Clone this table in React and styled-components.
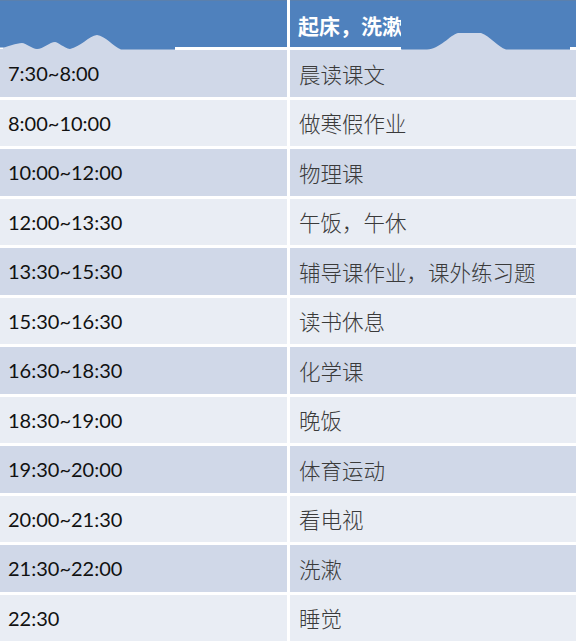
import React from "react";
import styled, { createGlobalStyle } from "styled-components";

/* ---------- Data ---------- */

const schedule = [
  ["7:30~8:00", "晨读课文"],
  ["8:00~10:00", "做寒假作业"],
  ["10:00~12:00", "物理课"],
  ["12:00~13:30", "午饭，午休"],
  ["13:30~15:30", "辅导课作业，课外练习题"],
  ["15:30~16:30", "读书休息"],
  ["16:30~18:30", "化学课"],
  ["18:30~19:00", "晚饭"],
  ["19:30~20:00", "体育运动"],
  ["20:00~21:30", "看电视"],
  ["21:30~22:00", "洗漱"],
  ["22:30", "睡觉"],
];

const BLUE = "#4f81bd";
const DARK_ROW = "#d0d8e8";
const LIGHT_ROW = "#e9edf4";

/* ---------- Styles ---------- */

const GlobalStyle = createGlobalStyle`
  html, body {
    margin: 0;
    padding: 0;
    background: #ffffff;
  }
`;

const Table = styled.div`
  position: relative;
  width: 576px;
  height: 641px;
  overflow: hidden;
  display: grid;
  grid-template-columns: 287px 286px;
  grid-template-rows: 47px repeat(12, 46.5px);
  column-gap: 3px;
  row-gap: 3px;
  background: #ffffff;
`;

const HeadCell = styled.div`
  background: ${BLUE};
  border-top: 1px solid #5b80ad;
  display: flex;
  align-items: center;
  padding-left: 8px;
  padding-top: 2px;
  color: #ffffff;
  font-family: "Noto Sans CJK SC", "DejaVu Serif", serif;
  font-weight: 700;
  font-size: 21px;
  white-space: nowrap;
  overflow: hidden;
`;

const Cell = styled.div`
  background: ${({ $dark }) => ($dark ? DARK_ROW : LIGHT_ROW)};
  display: flex;
  align-items: center;
  white-space: nowrap;
`;

const TimeCell = styled(Cell)`
  padding-left: 8px;
  font-family: Lato, "Liberation Sans", sans-serif;
  font-size: 20px;
  color: #111111;
`;

const TaskCell = styled(Cell)`
  padding-left: 9px;
  font-family: "Noto Sans CJK SC", "Noto Sans", sans-serif;
  font-weight: 300;
  font-size: 21.5px;
  color: #3a3a3a;
`;

const Smudge = styled.svg`
  position: absolute;
  top: 0;
  left: 0;
  width: 576px;
  height: 52px;
  pointer-events: none;
`;

/* ---------- Component ---------- */

const HeaderSmudge = () => (
  <Smudge viewBox="0 0 576 52">
    <defs>
      <filter id="soft" x="-5%" y="-20%" width="110%" height="140%">
        <feGaussianBlur stdDeviation="0.7" />
      </filter>
    </defs>
    <rect x="0" y="30" width="175" height="22" fill={DARK_ROW} />
    <rect x="402" y="28" width="174" height="24" fill={DARK_ROW} />
    <rect x="0" y="46" width="3" height="3" fill="#ffffff" />
    <rect x="570" y="47" width="6" height="3" fill="#ffffff" />
    <g filter="url(#soft)" fill={BLUE}>
      <path d="M0,1 H175 V49.5 H121 C113,46 105,36 97,35 C89,36 80,47 70,49 C64,48 58,42 55,42 C50,42 43,49 37,49 C32,49 26,43 22,43 C16,43 8,47 3,47.5 H0 Z" />
      <path d="M401,1 H576 V47 H570 V49.5 H506 C498,47 490,36 481,33 H458 C450,35 440,49 427,49.5 H401 Z" />
    </g>
  </Smudge>
);

const App = () => {
  return (
    <>
      <GlobalStyle />
      <Table>
        <HeadCell />
        <HeadCell>起床，洗漱</HeadCell>

        {schedule.map(([time, task], i) => (
          <React.Fragment key={time}>
            <TimeCell $dark={i % 2 === 0}>{time}</TimeCell>
            <TaskCell $dark={i % 2 === 0}>{task}</TaskCell>
          </React.Fragment>
        ))}

        <HeaderSmudge />
      </Table>
    </>
  );
};

export default App;
